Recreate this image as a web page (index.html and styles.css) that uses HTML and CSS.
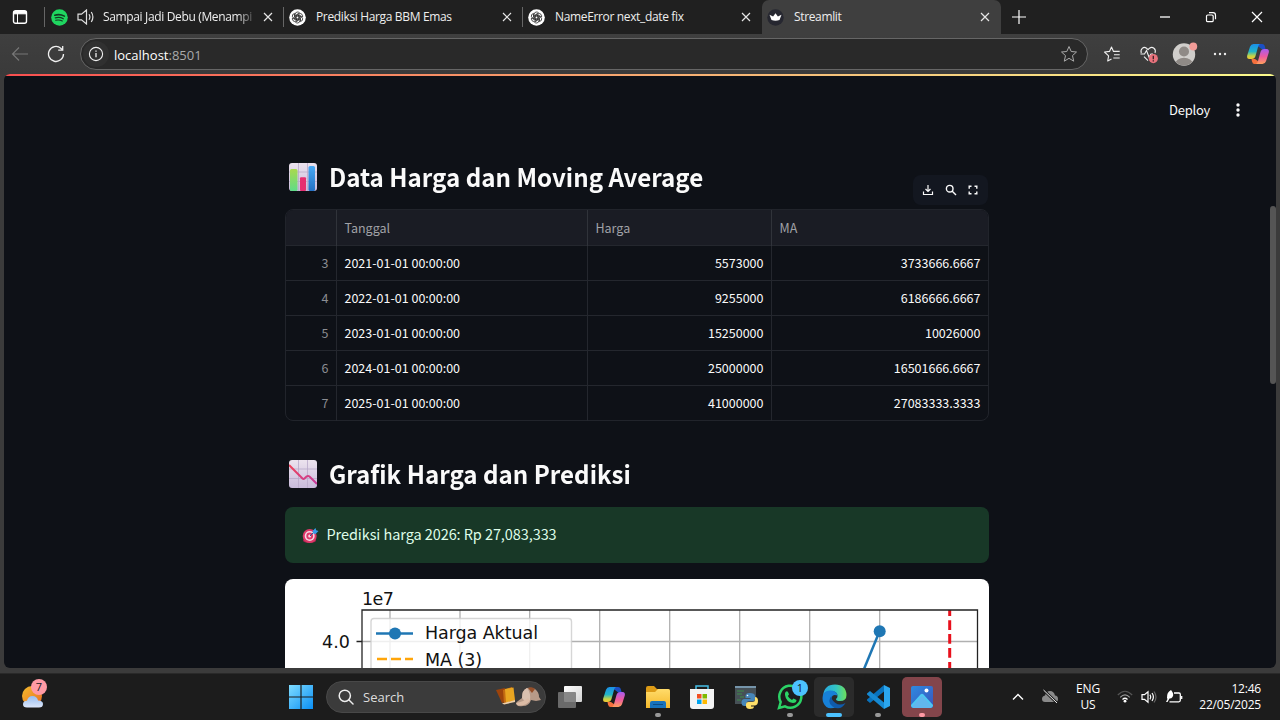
FILE: index.html
```html
<!DOCTYPE html>
<html lang="id">
<head>
<meta charset="utf-8">
<title>Streamlit</title>
<link rel="stylesheet" href="styles.css">
</head>
<body>
<svg class="defs" width="0" height="0">
  <defs>
    <linearGradient id="cpA" x1="0" y1="0" x2="0" y2="1"><stop offset="0" stop-color="#1b8fe8"/><stop offset=".5" stop-color="#22b5c8"/><stop offset=".8" stop-color="#c5d545"/><stop offset="1" stop-color="#f5c431"/></linearGradient>
    <linearGradient id="cpB" x1="0" y1="0" x2="0" y2="1"><stop offset="0" stop-color="#a75cf0"/><stop offset=".5" stop-color="#ed5aa0"/><stop offset="1" stop-color="#ff9f5c"/></linearGradient>
    <symbol id="copilot" viewBox="0 0 24 24">
      <path d="M8 2h8q2.500 0 3 3l.7 2.500h-3.500L13 5z" fill="#1b4fc4"/>
      <path d="M16 22H8.500q-2 0-2.500-2.500L5.500 17H9z" fill="#f5703d"/>
      <path d="M7.500 2h6.500q-1.500.7-2 3l-2.500 9q-.8 3-3.800 3H3.500Q.5 17 1.200 13.500L4 4.800Q5 2 7.500 2z" fill="url(#cpA)"/>
      <path d="M16.500 22H10q1.500-.7 2-3l2.500-9q.8-3 3.800-3h2.200q3 0 2.300 3.500L20 19.200Q19 22 16.500 22z" fill="url(#cpB)"/>
    </symbol>
    <symbol id="gpt" viewBox="0 0 17 17">
      <circle cx="8.500" cy="8.500" r="8.300" fill="#fff"/>
      <g fill="none" stroke="#222" stroke-width=".75">
        <path id="petal" d="M6.200 9.900V5.300q0-2 2-2.300 1.400-.1 2.300.8L7.200 5.900v3.400"/>
        <use href="#petal" transform="rotate(60 8.500 8.500)"/><use href="#petal" transform="rotate(120 8.500 8.500)"/><use href="#petal" transform="rotate(180 8.500 8.500)"/><use href="#petal" transform="rotate(240 8.500 8.500)"/><use href="#petal" transform="rotate(300 8.500 8.500)"/>
      </g>
    </symbol>
    <symbol id="close" viewBox="0 0 10 10"><path d="M1 1l8 8M9 1l-8 8" stroke="#e6e6e6" stroke-width="1.200" fill="none"/></symbol>
    <linearGradient id="paper" x1="0" y1="0" x2="0" y2="1"><stop offset="0" stop-color="#ece3ee"/><stop offset="1" stop-color="#c9bbdb"/></linearGradient>
    <linearGradient id="barBlue" x1="0" y1="0" x2="0" y2="1"><stop offset="0" stop-color="#48aaf5"/><stop offset="1" stop-color="#2370c4"/></linearGradient>
    <linearGradient id="barGreen" x1="0" y1="0" x2="0" y2="1"><stop offset="0" stop-color="#a9d94e"/><stop offset="1" stop-color="#5fdc88"/></linearGradient>
    <linearGradient id="fall" x1="0" y1="0" x2="1" y2="1"><stop offset="0" stop-color="#ee4458"/><stop offset="1" stop-color="#c53a9c"/></linearGradient>
    <linearGradient id="win" x1="0" y1="0" x2="1" y2="1"><stop offset="0" stop-color="#7fdcff"/><stop offset="1" stop-color="#0a8ff5"/></linearGradient>
    <linearGradient id="sun" x1="0" y1="0" x2="1" y2="1"><stop offset="0" stop-color="#f3bd2c"/><stop offset="1" stop-color="#ea6a24"/></linearGradient>
    <linearGradient id="cloud" x1="0" y1="0" x2="0" y2="1"><stop offset="0" stop-color="#97bdf0"/><stop offset="1" stop-color="#dce6fa"/></linearGradient>
    <linearGradient id="folder" x1="0" y1="0" x2="0" y2="1"><stop offset="0" stop-color="#ffdc6b"/><stop offset="1" stop-color="#f5b92c"/></linearGradient>
    <linearGradient id="edgeG" x1="0" y1="0" x2="1" y2="0"><stop offset="0" stop-color="#27a6e2"/><stop offset=".55" stop-color="#32c4c4"/><stop offset="1" stop-color="#6de05a"/></linearGradient>
    <linearGradient id="photo" x1="0" y1="0" x2="1" y2="1"><stop offset="0" stop-color="#2e8ae0"/><stop offset="1" stop-color="#3a55bc"/></linearGradient>
    <linearGradient id="taskw" x1="0" y1="0" x2="1" y2="1"><stop offset="0" stop-color="#fff"/><stop offset="1" stop-color="#d2d2d2"/></linearGradient>
  </defs>
</svg>

<header class="tabstrip">
  <div class="workspace"><svg width="16" height="16" viewBox="0 0 16 16"><rect x="1.500" y="1.700" width="13" height="12.600" rx="2" fill="none" stroke="#fff" stroke-width="1.400"/><path d="M2 2.500h12v2.300H2zM5.500 4v10" fill="#fff" stroke="#fff"/></svg></div>
  <div class="tab playing">
    <svg width="17" height="17" viewBox="0 0 17 17"><circle cx="8.500" cy="8.500" r="8.300" fill="#1fd660"/><g fill="none" stroke="#123a20" stroke-linecap="round"><path d="M3.800 6.200q5-1.500 9.600.9" stroke-width="1.600"/><path d="M4.300 8.900q4.300-1.200 8 .8" stroke-width="1.300"/><path d="M4.700 11.300q3.600-.9 6.600.7" stroke-width="1.100"/></g></svg>
    <svg class="sound" width="18" height="16" viewBox="0 0 18 16" fill="none" stroke="#e0e0e0" stroke-width="1.200"><path d="M1 5.200H4.500L9.500 1v14l-5-4.200H1zM12 5.200q1.800 2.800 0 5.600M14.300 3q3.200 5 0 10"/></svg>
    <span class="title fade">Sampai Jadi Debu (Menampi</span>
    <svg class="x" width="10" height="10"><use href="#close"/></svg>
  </div>
  <div class="tab">
    <svg width="17" height="17"><use href="#gpt"/></svg><span class="title">Prediksi Harga BBM Emas</span><svg class="x" width="10" height="10"><use href="#close"/></svg>
  </div>
  <div class="tab">
    <svg width="17" height="17"><use href="#gpt"/></svg><span class="title">NameError next_date fix</span><svg class="x" width="10" height="10"><use href="#close"/></svg>
  </div>
  <div class="tab active">
    <svg width="17" height="17" viewBox="0 0 17 17"><circle cx="8.500" cy="8.500" r="8.200" fill="#262730"/><path d="M2.500 5.800l3.600 1.700 2.400-3.200 2.400 3.200 3.600-1.700-2 5.200q-4 1.400-8 0z" fill="#fff"/></svg><span class="title">Streamlit</span><svg class="x" width="10" height="10"><use href="#close"/></svg>
  </div>
  <svg class="plus" width="16" height="16" viewBox="0 0 16 16"><path d="M1 8h14M8 1v14" stroke="#fff" stroke-width="1.200"/></svg>
  <div class="wincontrols">
    <svg width="12" height="12" viewBox="0 0 12 12"><path d="M1 6h10" stroke="#fff" stroke-width="1.300"/></svg>
    <svg width="12" height="12" viewBox="0 0 12 12" fill="none" stroke="#fff" stroke-width="1.200"><rect x="1.500" y="4" width="6.700" height="6.700" rx="1.300"/><path d="M4 1.700h4q2.500 0 2.500 2.500v4"/></svg>
    <svg width="12" height="12" viewBox="0 0 12 12"><path d="M1 1l10 10M11 1L1 11" stroke="#fff" stroke-width="1.200"/></svg>
  </div>
</header>

<div class="toolbar">
  <svg class="back" width="18" height="16" viewBox="0 0 18 16" fill="none" stroke="#777" stroke-width="1.100"><path d="M17 8H1.500M8 1.500L1.500 8 8 14.500"/></svg>
  <svg class="reload" width="18" height="18" viewBox="0 0 18 18" fill="none" stroke="#f0f0f0" stroke-width="1.300"><path d="M16.500 9a7.500 7.500 0 1 1-2.700-5.800L15.500 5"/><path d="M15.700 1v4.200h-4.500"/></svg>
  <div class="address">
    <span class="info"><svg width="16" height="16" viewBox="0 0 16 16"><circle cx="8" cy="8" r="6.600" fill="none" stroke="#f0f0f0" stroke-width="1.100"/><path d="M8 7v4.200M8 4.500v1.300" stroke="#f0f0f0" stroke-width="1.300"/></svg></span>
    <span class="url">localhost<i>:8501</i></span>
    <svg class="star" width="18" height="18" viewBox="0 0 18 18"><path d="M9 1.500l2.200 5 5.300.5-4 3.600 1.200 5.600L9 13.300l-4.700 2.900 1.200-5.600-4-3.600 5.300-.5z" fill="none" stroke="#aaa" stroke-linejoin="round"/></svg>
  </div>
  <svg class="fav" width="18" height="18" viewBox="0 0 18 18" fill="none" stroke="#f0f0f0" stroke-width="1.100" stroke-linejoin="round"><path d="M8.500 14L4.700 16l.9-5.200L1.500 7l5-.6L8.500 2l2 4.400h6.200M11 9.700h5.700M10.300 13h6.400"/></svg>
  <svg class="heart" width="20" height="19" viewBox="0 0 20 19" fill="none" stroke="#f0f0f0" stroke-width="1.100"><path d="M9 15.700L5 11.700M2.300 8C1 4.200 4.500 1 7.500 3.200L9 4.700l1.500-1.500C13.500 1 17.500 4 16 8M1.500 9h4l2-3.500 2.500 6.500 2-3h2"/><circle cx="14.300" cy="13.600" r="4.600" fill="#e8737d" stroke="none"/><path d="M14.300 10.800v3.500M14.300 15.200v1.400" stroke="#3b2023" stroke-width="1.300"/></svg>
  <svg class="avatar" width="26" height="24" viewBox="0 0 26 24"><defs><clipPath id="av"><circle cx="12" cy="12.500" r="11"/></clipPath></defs><circle cx="12" cy="12.500" r="11.200" fill="#d0cecb"/><g fill="#8f8a86" clip-path="url(#av)"><circle cx="12" cy="9.500" r="5"/><ellipse cx="12" cy="21.500" rx="8.500" ry="5.800"/></g><circle cx="21.300" cy="4.500" r="3.900" fill="#f29c98"/></svg>
  <svg class="dots" width="14" height="4" viewBox="0 0 14 4" fill="#eee"><circle cx="2" cy="2" r="1.200"/><circle cx="7" cy="2" r="1.200"/><circle cx="12" cy="2" r="1.200"/></svg>
  <svg class="cop" width="24" height="24"><use href="#copilot"/></svg>
</div>

<main class="page">
  <div class="rainbow"></div>
  <div class="appbar"><span>Deploy</span><svg width="4" height="14" viewBox="0 0 4 14" fill="#fafafa"><circle cx="2" cy="2" r="1.700"/><circle cx="2" cy="7" r="1.700"/><circle cx="2" cy="12" r="1.700"/></svg></div>
  <div class="scrollbar"></div>
  <div class="column">
    <h2><svg width="28" height="28" viewBox="0 0 28 28"><rect width="28" height="28" rx="3" fill="url(#paper)"/><path d="M9.500 0v28M18.500 0v28M0 9h28M0 18.500h28" stroke="#b9a9c9" stroke-width=".8"/><rect x="1" y="6" width="7.500" height="22" rx="1.500" fill="url(#barGreen)"/><rect x="11" y="14.300" width="6" height="13.700" rx="1" fill="#e62e70"/><rect x="19.500" y="3" width="6.500" height="25" rx="1.500" fill="url(#barBlue)"/></svg><span>Data Harga dan Moving Average</span></h2>
    <div class="frame">
      <div class="tools">
        <svg width="12" height="12" viewBox="0 0 12 12" fill="none" stroke="#fafafa" stroke-width="1.200"><path d="M6 1v6M3.500 5L6 7.500 8.500 5M1.500 7.500v3h9v-3"/></svg>
        <svg width="12" height="12" viewBox="0 0 12 12" fill="none" stroke="#fafafa" stroke-width="1.400"><circle cx="4.700" cy="4.700" r="3.300"/><path d="M7 7l4 4"/></svg>
        <svg width="12" height="12" viewBox="0 0 12 12" fill="none" stroke="#fafafa" stroke-width="1.400"><path d="M2.200 4.700V2.200h2.300M7.500 2.200h2.300v2.500M9.800 7.500v2.300H7.500M4.500 9.800H2.200V7.500"/></svg>
      </div>
      <div class="row head"><div></div><div>Tanggal</div><div>Harga</div><div>MA</div></div>
      <div class="row"><div>3</div><div>2021-01-01 00:00:00</div><div>5573000</div><div>3733666.6667</div></div>
      <div class="row"><div>4</div><div>2022-01-01 00:00:00</div><div>9255000</div><div>6186666.6667</div></div>
      <div class="row"><div>5</div><div>2023-01-01 00:00:00</div><div>15250000</div><div>10026000</div></div>
      <div class="row"><div>6</div><div>2024-01-01 00:00:00</div><div>25000000</div><div>16501666.6667</div></div>
      <div class="row"><div>7</div><div>2025-01-01 00:00:00</div><div>41000000</div><div>27083333.3333</div></div>
    </div>
    <h2 class="second"><svg width="28" height="28" viewBox="0 0 28 28"><rect width="28" height="28" rx="3" fill="url(#paper)"/><path d="M9.500 0v28M18.500 0v28M0 9h28M0 18.500h28" stroke="#b9a9c9" stroke-width=".8"/><path d="M0 5l13.500 13.500q1 1 2 0l2-2q1.500-1 3 0l7.500 7.500" fill="none" stroke="url(#fall)" stroke-width="2"/></svg><span>Grafik Harga dan Prediksi</span></h2>
    <div class="success"><svg width="17" height="17" viewBox="0 0 17 17"><ellipse cx="7.500" cy="13.500" rx="6.500" ry="2.500" fill="#ae2452"/><circle cx="7.700" cy="9" r="7" fill="#dd3969"/><circle cx="7.700" cy="9" r="5" fill="#f4d8e4"/><circle cx="7.700" cy="9" r="3.400" fill="#dd3969"/><circle cx="7.700" cy="9" r="1.500" fill="#f4d8e4"/><path d="M8 9l4-4" stroke="#245f9e"/><path d="M10.500 4l3-3 .7 2.200 2.300.8-3 3-2.300-.5z" fill="#379ce8"/></svg><span>Prediksi harga 2026: Rp 27,083,333</span></div>
    <svg class="chart" width="704" height="89" viewBox="0 0 704 89">
      <path d="M105 31v58M175 31v58M244.700 31v58M314.700 31v58M384.700 31v58M454.700 31v58M524.700 31v58M594.700 31v58M77 62.500h615.500" stroke="#b0b0b0" stroke-width="1.300" fill="none"/>
      <path d="M594.700 52L579 90" stroke="#1f77b4" stroke-width="2.500"/><circle cx="594.700" cy="52.200" r="6" fill="#1f77b4"/>
      <path d="M664.700 31v58" stroke="#e8101c" stroke-width="3" stroke-dasharray="9.700 4.200" stroke-dashoffset="3.700"/>
      <path d="M77 89V31h615.500v58M71.500 62.500H77" fill="none" stroke="#222" stroke-width="1.300"/>
      <rect x="86" y="39.500" width="200.500" height="80" rx="3" fill="#fff" fill-opacity=".8" stroke="#ccc" stroke-opacity=".8" stroke-width="1.400"/>
      <path d="M91 54.500h37" stroke="#1f77b4" stroke-width="2.700"/><circle cx="110" cy="54.500" r="6" fill="#1f77b4"/>
      <path d="M92 80h36" stroke="#ffa50a" stroke-width="2.500" stroke-dasharray="10 4"/>
      <g class="plottext"><text x="77" y="26" textLength="32">1e7</text><text x="37" y="69" textLength="28">4.0</text><text x="140" y="60" textLength="113">Harga Aktual</text><text x="140" y="86.500" textLength="57">MA (3)</text></g>
    </svg>
  </div>
</main>
<div class="edge-bottom"></div>

<footer class="taskbar">
  <div class="weather"><svg width="24" height="24" viewBox="0 0 24 24"><circle cx="11" cy="11" r="10" fill="url(#sun)"/><path d="M6 22.500q-4 0-4-3.200t4-3.500q1-4.800 5.500-4.800t5.500 4.500q5 0 5 3.500t-4 3.500z" fill="url(#cloud)"/></svg><b class="badge pink">7</b></div>
  <div class="apps">
    <div class="app start"><svg width="24" height="24" viewBox="0 0 24 24" fill="url(#win)"><path d="M0 0h11.400v11.400H0zM12.600 0H24v11.400H12.600zM0 12.600h11.400V24H0zM12.600 12.600H24V24H12.600z"/></svg></div>
    <div class="search"><svg width="16" height="16" viewBox="0 0 16 16" fill="none" stroke="#eee" stroke-width="1.500"><circle cx="6.800" cy="6.800" r="5.600"/><path d="M11 11l4 4" stroke-linecap="round"/></svg><span>Search</span>
      <svg class="books" width="48" height="24" viewBox="0 0 48 24"><path d="M2 5l9-2 3 13-6 2z" fill="#9c430b"/><path d="M9 5l9-3 3 14-11 3z" fill="#c46c12"/><path d="M11 4l8.500-1.500 1.500 13-9 2z" fill="#e8a521"/><path d="M8 18l2 1.500 11-2.500v-2l-11 3z" fill="#edcfaa"/><path d="M23 20q-2-2 1-4l4-3q0-8 5-10 4-1 8 1 4 3 4 8l2 3-5 1-5-1q-2 6-8 6-5 1-6-1z" fill="#b79a88"/><path d="M28 13q0-8 5-10 4 5 3 12-4 4-8-2z" fill="#d9c0af"/><path d="M34 3q4-2 7 1l-3 4z" fill="#944e28"/><path d="M22 18q7-1 12-5l2 3q-6 6-13 4z" fill="#dbbba5"/></svg></div>
    <div class="app"><svg width="26" height="24" viewBox="0 0 26 24"><rect x="7" y="1" width="18" height="16" rx="1" fill="url(#taskw)"/><rect x="1" y="7" width="18" height="16" rx="1" fill="#777" fill-opacity=".86"/></svg></div>
    <div class="app"><svg width="24" height="24"><use href="#copilot"/></svg></div>
    <div class="app"><svg width="26" height="24" viewBox="0 0 26 24"><path d="M1 3q0-2 2-2h6l3 3h11q2 0 2 2v7H1z" fill="#dc9b16"/><path d="M1 7h9l3-3h10q2 0 2 2v17H1z" fill="url(#folder)"/><path d="M5 23v-5q0-2 2-2h12q2 0 2 2v5z" fill="#1672bd"/><path d="M8 19.500h10" stroke="#0b4d86"/></svg><i class="dot"></i></div>
    <div class="app"><svg width="24" height="24" viewBox="0 0 24 24"><path d="M6 5V1h12v4" fill="none" stroke="#45bfe6" stroke-width="1.500"/><path d="M0 4h24v17q0 3-3 3H3q-3 0-3-3z" fill="#f4f4f4"/><path d="M7 9h4.500v4.500H7z" fill="#f25022"/><path d="M12.500 9H17v4.500h-4.500z" fill="#7fba00"/><path d="M7 14.500h4.500V19H7z" fill="#00a4ef"/><path d="M12.500 14.500H17V19h-4.500z" fill="#ffb900"/></svg></div>
    <div class="app"><svg width="24" height="24" viewBox="0 0 24 24"><path d="M1 1h21v18H1z" fill="#465056"/><path d="M1 1h21v2H1z" fill="#7594aa"/><path d="M3 6h7M3 9h5M6 12h4M3 15h4" stroke="#3c8b48" stroke-width="1.200"/><path d="M15.500 8q-4 0-4 3v2h5v1h-6q-3 0-3 3.500T10.500 21h2v-2.500q0-2.500 2.500-2.500h4q2 0 2-2v-3q0-3-5.500-3z" fill="#4786b8"/><path d="M16 24q-4 0-4-3v-2q0-2 2.500-2h4q2.500 0 2.500-2.500V12q3 0 3 4t-3 4.500h-4v1h3q0 2.500-4 2.500z" fill="#ffe069"/><circle cx="13.500" cy="10.500" r=".8" fill="#fff"/></svg></div>
    <div class="app"><svg width="26" height="26" viewBox="0 0 26 26"><path d="M2 24l1.700-6A11 11 0 1 1 8 22.300z" fill="none" stroke="#2bd366" stroke-width="2.500"/><path d="M8.500 8q2-2 3 1l.5 1.500-1.200 1.500q1.500 2.800 4.200 4l1.500-1.500 3 1.500q0 3-3.500 3Q9 18 8 11q-.2-2 .5-3z" fill="#2bd366"/></svg><b class="badge blue">1</b><i class="dot"></i></div>
    <div class="app lit"><svg width="25" height="25" viewBox="0 0 25 25"><path d="M1 12Q2 .5 13 .5T24.500 11q0 6-6.500 6-4 0-4-2 1.500-1 1.500-3 0-4-5-5Q3 6.500 1 12z" fill="url(#edgeG)"/><path d="M.5 14Q1 6.500 8 6.500q6.500 0 7.500 5-5-2-6 2.500-.5 6 5 9Q5 27 1.500 19 .5 17 .5 14z" fill="#1781d8"/><path d="M9.500 12q-5 5.500 1 10.500 8 5 13-3.500-6 3-10 0Q9 16 9.500 12z" fill="#105bab"/></svg><i class="dot wide"></i></div>
    <div class="app"><svg width="25" height="24" viewBox="0 0 25 24"><path d="M18 0l6 3v18l-6 3z" fill="#2ba6ee"/><path d="M18 0v6.500L4 18l-3-2.500v-1z" fill="#0872bd"/><path d="M18 24v-6.500L4 6 1 8.500v1z" fill="#1689d2"/></svg><i class="dot"></i></div>
    <div class="app red"><svg width="24" height="24" viewBox="0 0 24 24"><rect x="1" y="1" width="22" height="22" rx="2" fill="url(#photo)"/><path d="M1 20L10.500 9.500q1.500-1.500 3 0L23 20q0 3-3 3H4q-3 0-3-3z" fill="#4cc9f2"/><path d="M2 21.500L10.500 12q1.500-1.500 3 0l8.500 9.500-2 1.500H4z" fill="#61b7ed"/><circle cx="16.500" cy="5.500" r="2" fill="#fff"/></svg><i class="dot rosy"></i></div>
  </div>
  <div class="tray">
    <svg width="12" height="8" viewBox="0 0 12 8"><path d="M1 6.500l5-5 5 5" fill="none" stroke="#fff" stroke-width="1.400"/></svg>
    <svg class="cloudoff" width="18" height="15" viewBox="0 0 18 15"><path d="M4 13q-3 0-3-3t3-3.500Q5 2 9 2t5 4.500q3 0 3 3.500t-3 3z" fill="#8a8a8a"/><path d="M2.500 1l13.500 13" stroke="#1c1c1c" stroke-width="2.500"/><path d="M2.500 1l13.500 13" stroke="#eee" stroke-width="1"/></svg>
    <div class="lang">ENG<br>US</div>
    <svg width="16" height="13" viewBox="0 0 16 13" fill="none"><path d="M.8 5q7.200-7.500 14.400 0" stroke="#555" stroke-width="1.200"/><path d="M3.200 7.300q4.800-5 9.600 0" stroke="#999" stroke-width="1.200"/><path d="M5.500 9.500q2.500-2.500 5 0" stroke="#fff" stroke-width="1.300"/><circle cx="8" cy="11.200" r="1.400" fill="#fff"/></svg>
    <svg class="vol" width="16" height="14" viewBox="0 0 16 14" fill="none" stroke="#fff" stroke-width="1.200"><path d="M1 4.700h2.500L7 1.700v10.600L3.500 9.300H1zM9 4.700q1.500 2.300 0 4.600M11 3q2.800 4 0 8"/><path d="M13 1.500q4 5.500 0 11" stroke="#666"/></svg>
    <svg class="bat" width="18" height="16" viewBox="0 0 18 16"><path d="M9 4h5q1.300 0 1.300 1.300v6q0 1.500-1.500 1.500H4.500M16.700 7v3" fill="none" stroke="#fff" stroke-width="1.300"/><path d="M2 9Q1.500 3.500 6 1q3.500 4 1.500 7-1 1.500-3 1.500L2.500 13H1l1.500-3z" fill="#fff"/></svg>
    <div class="clock"><span class="time">12:46</span><span class="date">22/05/2025</span></div>
  </div>
</footer>
</body>
</html>
```
FILE: styles.css
```css
* { box-sizing: border-box; }
body { margin: 0; width: 1280px; height: 720px; overflow: hidden; background: #3b3b3b; color: #fff; font: 12px/16px "Open Sans", "Noto Sans", sans-serif; display: flex; flex-direction: column; }
svg { display: block; flex: none; }
.defs { position: absolute; }
i { font-style: normal; }

.tabstrip { height: 34px; flex: none; background: #202020; display: flex; align-items: center; }
.workspace { width: 45px; padding-left: 12px; height: 20px; padding-top: 2px; border-right: 1px solid #666; }
.tab { width: 239px; height: 20px; display: flex; align-items: center; padding-left: 5px; padding-right: 10px; border-right: 1px solid #666; }
.tab:nth-of-type(4) { border-right-color: transparent; }
.playing { padding-left: 6px; padding-right: 10px; }
.sound { margin-left: 9px; }
.playing .title { margin-left: 8px; }
.title { margin-left: 10px; flex: 1; white-space: nowrap; color: #eee; font-size: 12px; letter-spacing: -.35px; line-height: 18px; padding-bottom: 1px; }
.fade { -webkit-mask-image: linear-gradient(90deg, #000 134px, transparent 154px); mask-image: linear-gradient(90deg, #000 134px, transparent 154px); }
.active { height: 34px; background: #3f3f3f; border: 0; border-radius: 7px 7px 0 0; padding-right: 11px; }
.plus { margin-left: 10px; }
.wincontrols { margin-left: auto; display: flex; gap: 34px; padding-right: 17px; }

.toolbar { height: 40px; flex: none; display: flex; align-items: center; padding-left: 11px; padding-right: 10px; background: linear-gradient(#3f3f3f, #3a3a3a); }
.reload { margin-left: 18px; }
.address { width: 1008px; height: 32px; margin-left: 15px; border: 1px solid #666; border-radius: 16px; background: #292929; display: flex; align-items: center; padding-left: 2px; padding-right: 9px; }
.info { width: 26px; height: 26px; border-radius: 13px; background: #303030; display: grid; place-items: center; }
.url { margin-left: 5px; font-size: 13px; padding-top: 1px; }
.url i { color: #aaa; }
.star { margin-left: auto; }
.fav { margin-left: 15px; }
.heart { margin-left: 18px; }
.avatar { margin-left: 13px; }
.dots { margin-left: 15px; }
.cop { margin-left: auto; }

.page { position: relative; width: 1272px; height: 594px; flex: none; margin: 0 4px; background: #0e1117; border-radius: 6px; overflow: hidden; font-family: "Noto Sans CJK SC", "Noto Sans", sans-serif; color: #fafafa; }
.rainbow { height: 2px; background: linear-gradient(90deg, #f94f50, #f88863 30%, #f6c37b 65%, #fbfb8c); }
.appbar { position: absolute; top: 26px; right: 36px; height: 20px; display: flex; align-items: center; gap: 26px; font-size: 13px; letter-spacing: -.25px; line-height: 20px; }
.scrollbar { position: absolute; right: 0; top: 132px; width: 6px; height: 178px; border-radius: 3px; background: #555; }
.column { width: 704px; margin: 84px 0 0 281.490px; display: flex; flex-direction: column; }
h2 { margin: 0; height: 34px; padding-left: 4px; display: flex; align-items: center; gap: 12px; font-size: 25.500px; line-height: 34px; font-weight: 600; white-space: nowrap; }
h2 span { transform: scaleX(.946); transform-origin: left; margin-top: -2px; }
.frame { position: relative; margin-top: 15px; height: 212px; border: 1px solid #21242b; border-radius: 8px; font-size: 12.500px; }
.tools { position: absolute; right: 0; top: -35px; width: 75px; height: 30px; border-radius: 8px; background: #131720; display: flex; align-items: center; justify-content: space-between; padding: 0 9px; }
.row { display: grid; grid-template-columns: 51px 251px 184px 1fr; height: 35px; line-height: 34px; border-bottom: 1px solid #24272e; }
.row:last-child { border-bottom: 0; }
.row > div { padding: 0 8px 0 7px; border-right: 1px solid #24272e; text-align: right; }
.row > div:nth-child(2) { text-align: left; }
.row > div:last-child { border-right: 0; }
.row > div:first-child { color: #8b8d92; }
.row.head { height: 36px; line-height: 36px; background: #1a1c24; border-radius: 7px 7px 0 0; color: #a0a1a6; }
.row.head > div { text-align: left; border-color: #30333a; }
.second { margin-top: 36px; }
.success { margin-top: 16px; height: 56px; border-radius: 8px; background: #183827; color: #dffde9; display: flex; align-items: center; gap: 7px; padding-left: 17px; font-size: 14.500px; letter-spacing: -.08px; line-height: 24px; white-space: nowrap; }
.success span { margin-top: -2px; }
.chart { margin-top: 16px; background: #fff; border-radius: 8px 8px 0 0; }
.plottext { font: 17.500px "DejaVu Sans", sans-serif; fill: #111; }
.edge-bottom { height: 5px; flex: none; background: #3b3b3b; }

.taskbar { height: 47px; flex: none; background: #1c1c1c; display: flex; align-items: center; border-top: 1px solid #292929; padding-bottom: 1px; }
.weather { position: relative; width: 279px; padding-left: 21px; }
.badge { position: absolute; width: 16px; height: 16px; border-radius: 8px; color: #16191e; font-size: 11px; line-height: 16px; font-weight: 400; text-align: center; }
.pink { left: 31px; top: -6px; background: #ff9aa5; }
.blue { right: 2px; top: 3px; background: #4cc2ff; }
.apps { display: flex; gap: 4px; }
.app { position: relative; width: 40px; height: 40px; border-radius: 5px; display: grid; place-items: center; }
.start { margin-left: 2px; margin-right: 1px; }
.lit { background: #2b2b2b; }
.red { background: #83454b; }
.dot { position: absolute; left: 17px; bottom: 0; width: 6px; height: 4px; border-radius: 2px; background: #999; }
.dot.wide { left: 12px; width: 16px; background: #4cc2ff; }
.dot.rosy { background: #ff99a4; }
.search { width: 220px; height: 32px; margin: 4px 0; border-radius: 16px; background: #3b3b3b; border: 1px solid #484848; display: flex; align-items: center; padding-left: 11px; font-size: 13px; }
.search span { margin-left: 9px; color: #ddd; }
.books { margin-left: auto; margin-right: 3px; }
.tray { margin-left: auto; display: flex; align-items: center; padding-right: 19px; font-size: 12px; letter-spacing: -.2px; }
.cloudoff { margin-left: 17px; }
.lang { width: 30px; margin: 0 14px 0 14px; text-align: center; }
.vol { margin-left: 8px; }
.bat { margin-left: 8px; }
.clock { width: 78px; display: flex; flex-direction: column; align-items: flex-end; }
```
